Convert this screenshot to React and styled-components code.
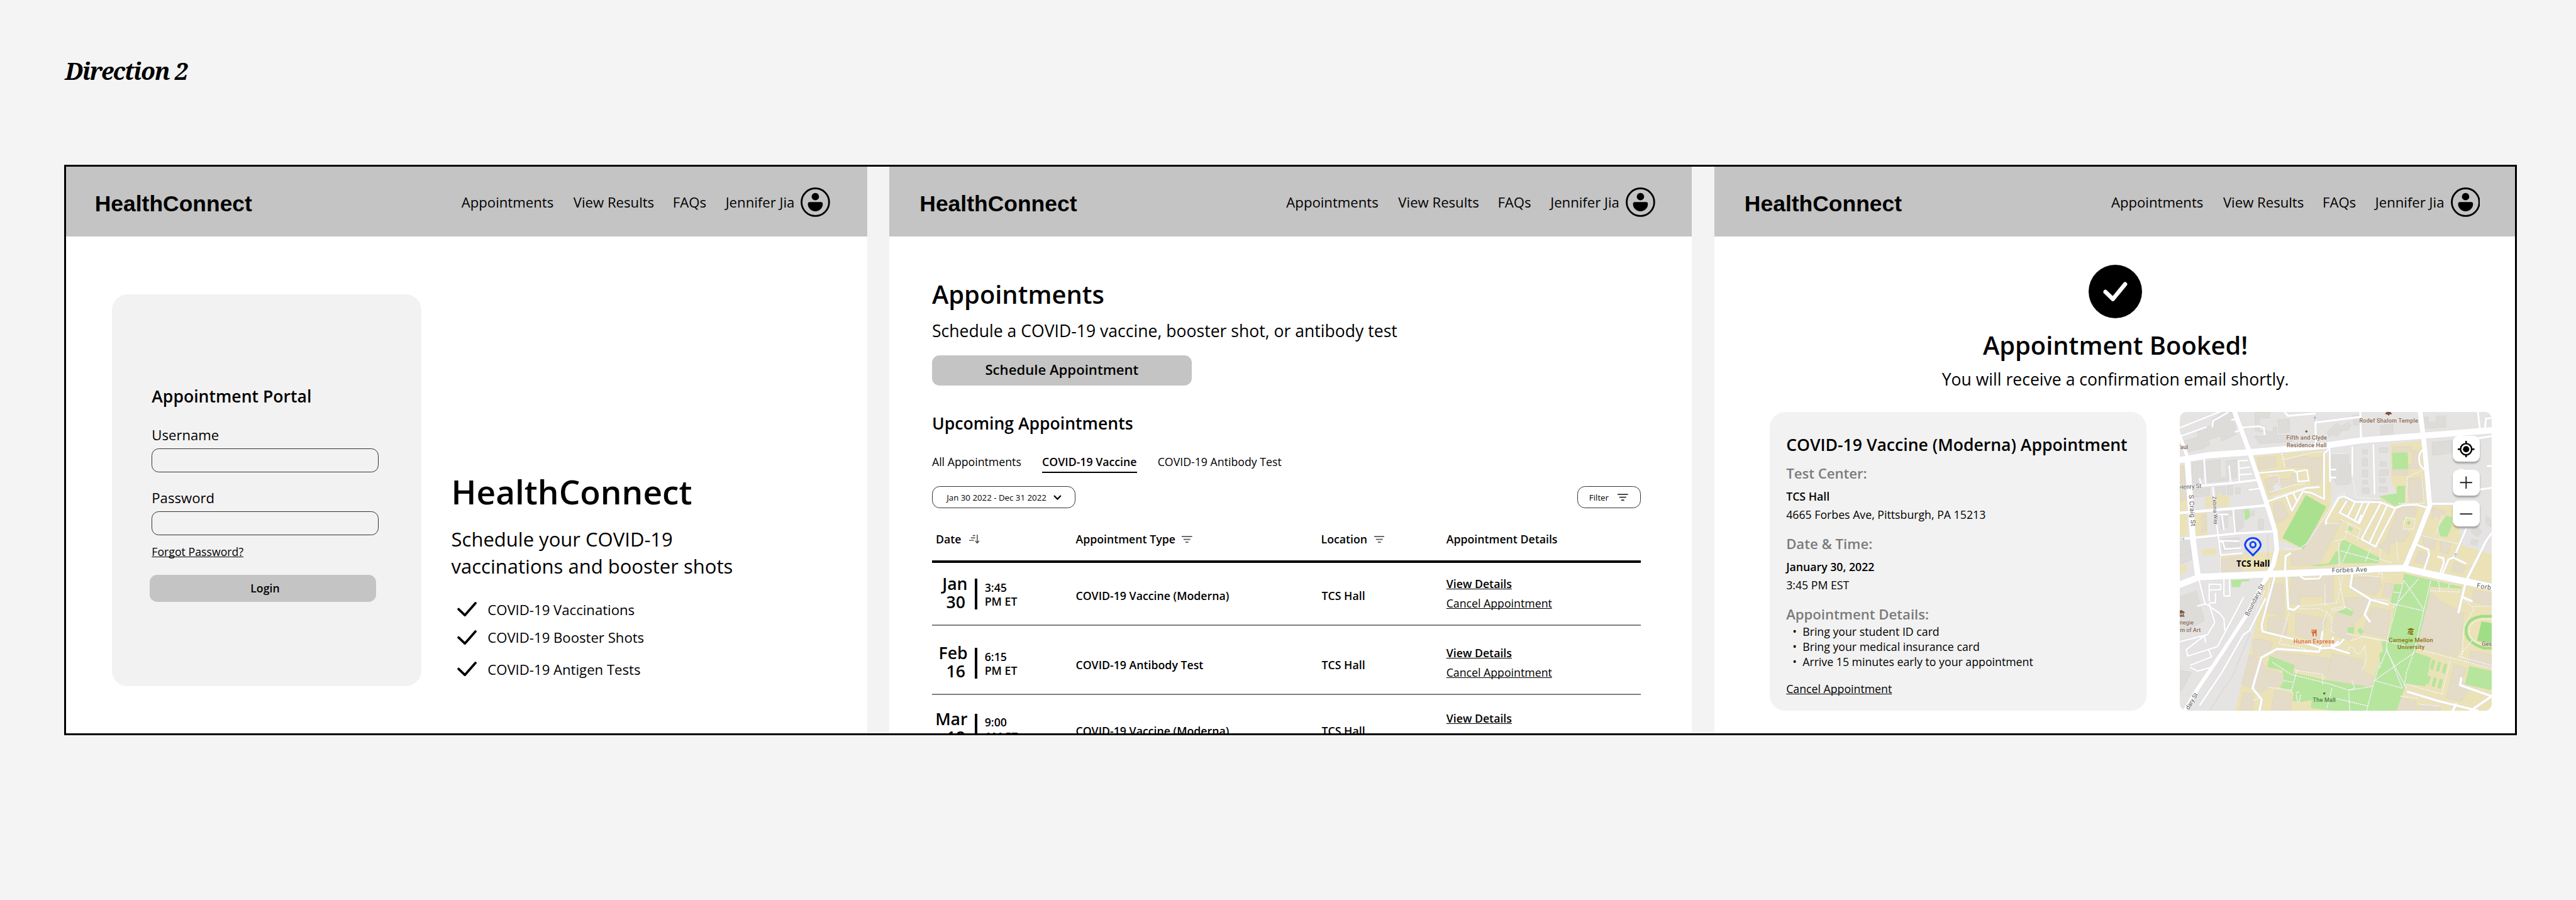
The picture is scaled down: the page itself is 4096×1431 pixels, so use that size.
import React from "react";
import styled, { createGlobalStyle, css } from "styled-components";

/* 1rem equals a 432nd of the window width, so the board always fills the window. */
const GlobalStyle = createGlobalStyle`
  *, *::before, *::after { box-sizing: border-box; }
  html { font-size: calc(100vw / 432); }
  body {
    margin: 0;
    overflow: hidden;
    background: #f4f4f4;
    color: #000;
    font-family: "Open Sans", "Noto Sans", sans-serif;
    font-size: 1.87rem;
    line-height: 1.36;
  }
  h1, h2, h3, p, ul { margin: 0; padding: 0; font: inherit; }
  ul { list-style: none; }
  button { border: 0; padding: 0; color: inherit; font: inherit; }
  svg { display: block; flex: none; }
`;

const sizes = {
  display: "5.61rem",
  title: "4.206rem",
  lead: "3.272rem",
  large: "2.804rem",
  medium: "2.337rem",
  small: "1.87rem",
  tiny: "1.402rem",
};

/* ---------- Board ---------- */

const Board = styled.main`
  display: flex;
  flex-direction: column;
  height: 150.9rem;
  padding-left: 10.8rem;
`;

const BoardTitle = styled.h1`
  height: 27.6rem;
  padding: 9.3rem 0 0 0.1rem;
  font-family: "Noto Serif", "Liberation Serif", serif;
  font-size: 3.95rem;
  font-style: italic;
  font-weight: 700;
  letter-spacing: -0.15rem;
  white-space: nowrap;
`;

const Frame = styled.section`
  position: relative;
  display: flex;
  gap: 3.73rem;
  width: 411.3rem;
  height: 95.7rem;
  overflow: hidden;
  background: #f3f3f3;

  &::after {
    content: "";
    position: absolute;
    inset: 0;
    border: 3px solid #000;
  }
`;

const Screen = styled.article`
  display: flex;
  flex-direction: column;
  flex: none;
  width: 134.6rem;
  height: 100%;
  background: #fff;
  white-space: nowrap;
`;

const Text = styled.p`
  font-size: ${({ $size = "small" }) => sizes[$size]};
  font-weight: ${({ $bold }) => ($bold ? 600 : 400)};
  margin-top: ${({ $top = 0 }) => $top}rem;
  color: ${({ $muted }) => ($muted ? "#7b7b7b" : "inherit")};
`;

const Link = styled.a`
  display: block;
  margin-top: ${({ $top = 0 }) => $top}rem;
  font-size: 1.87rem;
  font-weight: ${({ $bold }) => ($bold ? 600 : 400)};
  text-decoration: underline;
  text-decoration-skip-ink: none;
  text-decoration-thickness: 1px;
`;

const Button = styled.button`
  display: flex;
  align-items: center;
  justify-content: center;
  flex: none;
  background: #c4c4c4;
  border-radius: 1.25rem;
  font-weight: 600;
`;

/* ---------- Navigation ---------- */

const NavBar = styled.header`
  display: flex;
  align-items: center;
  flex: none;
  height: 12.03rem;
  padding: 0.6rem 6.15rem 0 5.1rem;
  background: #c4c4c4;
`;

const Logo = styled.span`
  margin-right: auto;
  padding-top: 0.6rem;
  font-family: "Liberation Sans", Arial, sans-serif;
  font-size: 3.74rem;
  font-weight: 700;
  line-height: 1.15;
`;

const NavLinks = styled.nav`
  display: flex;
  align-items: center;
  gap: 3.33rem;
  font-size: 2.337rem;
`;

const NavLink = styled.a`
  ${({ $tight }) => $tight && css`margin: 0 -0.1rem 0 -0.2rem;`}
`;

const Profile = styled.div`
  display: flex;
  align-items: center;
  gap: 1.07rem;

  svg { width: 4.94rem; height: 4.94rem; }
`;

function Header() {
  return (
    <NavBar>
      <Logo>HealthConnect</Logo>
      <NavLinks>
        <NavLink>Appointments</NavLink>
        <NavLink>View Results</NavLink>
        <NavLink $tight>FAQs</NavLink>
        <Profile>
          Jennifer Jia
          <svg viewBox="0 0 49.4 49.4">
            <circle cx="24.7" cy="24.7" r="23.1" fill="none" stroke="#000" strokeWidth="3" />
            <circle cx="24.7" cy="15.5" r="6.2" />
            <path d="M12.2 27.7q0-3.1 3.1-3.1h18.8q3.1 0 3.1 3.1a12.5 12.4 0 0 1-25 0z" />
          </svg>
        </Profile>
      </NavLinks>
    </NavBar>
  );
}

/* ---------- Icons ---------- */

const CheckSvg = styled.svg`
  width: 3.3rem;
  height: 2.47rem;
`;

const Check = () => (
  <CheckSvg viewBox="0 0 33 24.7" fill="none" stroke="#000" strokeWidth="4" strokeLinecap="round" strokeLinejoin="round">
    <path d="M2.3 12.2 12.8 22.4 30.6 2.2" />
  </CheckSvg>
);

const FilterSvg = styled.svg`
  width: 1.75rem;
  height: 1.2rem;
`;

const FilterIcon = ({ color = "#5a5a5a" }) => (
  <FilterSvg viewBox="0 0 17.5 12" stroke={color} strokeWidth="1.9">
    <path d="M0 1.2h17.5M3 6h11.5M6.2 10.8h5" />
  </FilterSvg>
);

const SortSvg = styled.svg`
  width: 1.75rem;
  height: 1.5rem;
`;

const SortIcon = () => (
  <SortSvg viewBox="0 0 17.5 15" fill="none" stroke="#444" strokeWidth="1.5">
    <path d="M6 1.6h4.2M3 5.6h7.2M0 9.6h8.2M13.6 0v14M10.4 10.6l3.2 3.5 3.2-3.5" />
  </SortSvg>
);

const ChevronSvg = styled.svg`
  width: 1.35rem;
  height: 0.85rem;
`;

/* ---------- Login screen ---------- */

const LoginBody = styled.div`
  display: flex;
  align-items: flex-start;
  padding: 9.7rem 0 0 8rem;
`;

const LoginCard = styled.form`
  display: flex;
  flex-direction: column;
  width: 51.9rem;
  height: 65.7rem;
  padding: 15.17rem 0 0 6.65rem;
  background: #f2f2f2;
  border-radius: 2.6rem;
`;

const Field = styled.div`
  width: 38rem;
  height: 3.97rem;
  flex: none;
  margin-top: 0.77rem;
  border: 1px solid #333;
  border-radius: 1.2rem;
`;

const LoginButton = styled(Button)`
  width: 38rem;
  height: 4.55rem;
  margin: 2.68rem 0 0 -0.35rem;
  padding: 0 0 0.26rem 0.7rem;
`;

const Intro = styled.div`
  padding: 29.35rem 0 0 4.98rem;
`;

const Pitch = styled.p`
  width: 50rem;
  margin-top: 1.89rem;
  font-size: 3.272rem;
  line-height: 4.47rem;
`;

const Benefit = styled.li`
  display: flex;
  align-items: center;
  gap: 1.84rem;
  margin-top: ${({ $top }) => $top}rem;
  padding-left: 0.95rem;
  font-size: 2.337rem;
`;

function LoginScreen() {
  return (
    <Screen>
      <Header />
      <LoginBody>
        <LoginCard>
          <Text as="h2" $size="large" $bold>Appointment Portal</Text>
          <Text $size="medium" $top={2.98}>Username</Text>
          <Field />
          <Text $size="medium" $top={2.63}>Password</Text>
          <Field />
          <Link $top={1.45}>Forgot Password?</Link>
          <LoginButton type="button">Login</LoginButton>
        </LoginCard>
        <Intro>
          <Text as="h2" $size="display" $bold>HealthConnect</Text>
          <Pitch>
            Schedule your COVID-19
            <br />
            vaccinations and booster shots
          </Pitch>
          <ul>
            <Benefit $top={3.47}><Check />COVID-19 Vaccinations</Benefit>
            <Benefit $top={1.52}><Check />COVID-19 Booster Shots</Benefit>
            <Benefit $top={2.12}><Check />COVID-19 Antigen Tests</Benefit>
          </ul>
        </Intro>
      </LoginBody>
    </Screen>
  );
}

/* ---------- Appointments screen ---------- */

const ListBody = styled.div`
  display: flex;
  flex-direction: column;
  width: 126.02rem;
  padding: 6.93rem 0 0 7.17rem;
`;

const ScheduleButton = styled(Button)`
  width: 43.55rem;
  height: 5.03rem;
  margin-top: 2.22rem;
  padding-bottom: 0.26rem;
  font-size: 2.337rem;
`;

const Tabs = styled.nav`
  display: flex;
  gap: 3.5rem;
  margin-top: 3.28rem;
`;

const Tab = styled.a`
  padding-bottom: 0.34rem;
  border-bottom: 2px solid ${({ $active }) => ($active ? "#000" : "transparent")};
  font-weight: ${({ $active }) => ($active ? 600 : 400)};
`;

const Controls = styled.div`
  display: flex;
  justify-content: space-between;
  margin-top: 2.28rem;
`;

const Pill = styled.div`
  display: flex;
  align-items: center;
  gap: ${({ $gap }) => $gap}rem;
  width: ${({ $width }) => $width}rem;
  height: 3.68rem;
  padding-left: ${({ $pad }) => $pad}rem;
  border: 1px solid #333;
  border-radius: 1.3rem;
  font-size: 1.402rem;
`;

const columns = css`
  display: grid;
  grid-template-columns: 24.1rem 41.15rem 21rem 1fr;
`;

const HeadRow = styled.div`
  ${columns}
  margin-top: 3.91rem;
  padding-bottom: 2.3rem;
  border-bottom: 4px solid #000;
`;

const HeadCell = styled.div`
  display: flex;
  align-items: center;
  gap: ${({ $gap = 1.1 }) => $gap}rem;
  padding-left: ${({ $inset = 0 }) => $inset}rem;
  font-weight: 600;
`;

const Row = styled.div`
  ${columns}
  align-items: start;
  flex: none;
  height: ${({ $height }) => $height}rem;
  padding-top: ${({ $lead }) => $lead}rem;
  border-bottom: 2px solid #808080;
`;

const When = styled.div`
  display: flex;
  padding-top: 1.94rem;
`;

const Day = styled.div`
  display: flex;
  flex-direction: column;
  align-items: flex-end;
  width: 5.97rem;
  font-size: 2.804rem;
  font-weight: 600;
  line-height: 3.1rem;
`;

const DayNumber = styled.span`
  padding-right: 0.38rem;
`;

const Divider = styled.div`
  width: 0.4rem;
  height: 5.14rem;
  margin: 0.66rem 1.27rem 0 1.2rem;
  background: #000;
`;

const Time = styled.div`
  padding-top: 0.94rem;
  font-weight: 600;
  line-height: 2.4rem;
`;

const Cell = styled.div`
  padding: 4.18rem 0 0 ${({ $inset = 0 }) => $inset}rem;
  font-weight: 600;
`;

const Actions = styled.div`
  padding-top: 1.82rem;
  line-height: 3.3rem;
`;

const appointments = [
  { month: "Jan", day: "30", time: "3:45", zone: "PM ET", type: "COVID-19 Vaccine (Moderna)", height: 10.55, lead: 0 },
  { month: "Feb", day: "16", time: "6:15", zone: "PM ET", type: "COVID-19 Antibody Test", height: 11.57, lead: 1.05 },
  { month: "Mar", day: "18", time: "9:00", zone: "AM ET", type: "COVID-19 Vaccine (Moderna)", height: 11.57, lead: 0.55 },
];

function AppointmentsScreen() {
  return (
    <Screen>
      <Header />
      <ListBody>
        <Text as="h2" $size="title" $bold>Appointments</Text>
        <Text $size="large" $top={1.27}>Schedule a COVID-19 vaccine, booster shot, or antibody test</Text>
        <ScheduleButton type="button">Schedule Appointment</ScheduleButton>
        <Text as="h3" $size="large" $bold $top={4.5}>Upcoming Appointments</Text>
        <Tabs>
          <Tab>All Appointments</Tab>
          <Tab $active>COVID-19 Vaccine</Tab>
          <Tab>COVID-19 Antibody Test</Tab>
        </Tabs>
        <Controls>
          <Pill $width={24.1} $pad={2.35} $gap={1.22}>
            Jan 30 2022 - Dec 31 2022
            <ChevronSvg viewBox="0 0 13.5 8.5" fill="none" stroke="#000" strokeWidth="2.3">
              <path d="M1 1l5.75 6L12.5 1" />
            </ChevronSvg>
          </Pill>
          <Pill $width={10.65} $pad={1.9} $gap={1.5}>
            Filter
            <FilterIcon color="#333" />
          </Pill>
        </Controls>
        <HeadRow>
          <HeadCell $inset={0.65} $gap={1.35}>Date<SortIcon /></HeadCell>
          <HeadCell>Appointment Type<FilterIcon /></HeadCell>
          <HeadCell>Location<FilterIcon /></HeadCell>
          <HeadCell>Appointment Details</HeadCell>
        </HeadRow>
        {appointments.map((a) => (
          <Row key={a.month} $height={a.height} $lead={a.lead}>
            <When>
              <Day>
                {a.month}
                <DayNumber>{a.day}</DayNumber>
              </Day>
              <Divider />
              <Time>
                {a.time}
                <br />
                {a.zone}
              </Time>
            </When>
            <Cell>{a.type}</Cell>
            <Cell $inset={0.1}>TCS Hall</Cell>
            <Actions>
              <Link $bold>View Details</Link>
              <Link>Cancel Appointment</Link>
            </Actions>
          </Row>
        ))}
      </ListBody>
    </Screen>
  );
}

/* ---------- Confirmation screen ---------- */

const ConfirmBody = styled.div`
  display: flex;
  flex-direction: column;
  align-items: center;
  padding-top: 4.77rem;
`;

const Badge = styled.div`
  display: grid;
  place-items: center;
  width: 9rem;
  height: 9rem;
  border-radius: 50%;
  background: #000;

  svg { width: 4.1rem; height: 3.3rem; }
`;

const Panels = styled.div`
  display: flex;
  align-self: stretch;
  gap: 5.64rem;
  margin-top: 3.6rem;
  padding-left: 9.33rem;
`;

const Details = styled.section`
  width: 63.14rem;
  height: 50.1rem;
  padding: 3.57rem 0 0 2.76rem;
  background: #f2f2f2;
  border-radius: 2.6rem;
`;

const Notes = styled.ul`
  margin-top: 0.25rem;
  line-height: 2.52rem;
`;

const Note = styled.li`
  display: flex;
  padding-left: 1.08rem;

  &::before {
    content: "•";
    width: 1.67rem;
  }
`;

/* ---------- Map ---------- */

const MapFrame = styled.div`
  position: relative;
  width: 52.3rem;
  height: 50.1rem;
  overflow: hidden;
  border-radius: 1.2rem;
`;

const MapSvg = styled.svg`
  width: 100%;
  height: 100%;
  font-family: Roboto, "Open Sans", sans-serif;
  font-size: 29px;
  fill: none;
`;

const MapControls = styled.div`
  position: absolute;
  top: 4.03rem;
  right: 2.03rem;
  display: flex;
  flex-direction: column;
`;

const MapButton = styled.button`
  display: grid;
  place-items: center;
  width: 4.53rem;
  height: 4.33rem;
  margin-bottom: ${({ $below = 0 }) => $below}rem;
  background: #fff;
  border-radius: 0.95rem;
  box-shadow: 0 0.3rem 0.3rem rgba(0, 0, 0, 0.28);

  svg { width: 2.8rem; height: 2.8rem; }
`;

const greyBlocks = [
  "M220 0L262 0 284 112 212 146 204 120 142 140 150 166 112 186 40 200 22 146 92 128 84 92 176 62 164 36z",
  "M378 0H452V30H400V100H470V76H488V118H560L566 148 400 160 376 122H440V92L380 96z",
  "M492 40L550 36 554 100 500 106z",
  "M740 100L790 56 812 72 850 52 862 70 846 92 812 96 792 124 768 114 752 126z",
  "M870 18L902 14V66H874z",
  "M1010 68L1072 62V120L1010 126z",
  "M1222 26L1250 24V52H1290V20H1338V76L1230 84z",
  "M1268 152L1370 142V206L1272 218z",
  "M62 254L116 248V330L104 352 62 360z",
  "M134 248L204 240V330H234V246L286 240V330L240 344 140 354z",
  "M764 214L850 210V262H860V358L834 366H792L764 326z",
  "M920 188h24v24h-24zM918 232h26v40h-26zM918 292h28v36h-28zM920 344h24v20h-24zM918 382h36v28h-36z",
  "M1004 180h42v24h-42zM1008 250h32v22h-32zM1004 292h46v28h-46zM1006 334h30v22h-30zM1004 376h40v26h-40z",
  "M70 388L150 380V420L72 430zM180 380L230 376V428L186 430zM240 372h26v46h-26zM280 382h24v30h-24z",
  "M204 498L264 494 268 520H240V580L206 590z",
  "M278 490L320 488V580L286 600zM396 540l26 0v50h-26zM354 500l20-2v24h-20z",
  "M210 640L300 632V690L216 700zM326 690L396 684V712L330 720z",
  "M0 640H56V700H0zM0 712L60 700 66 740 0 770z",
  "M0 930L84 900 124 1050 10 1110 0 1100z",
  "M0 1300L60 1310 10 1400 0 1400z",
  "M1488 570l32 30-22 30-34-26zM1540 520l26 22v40l-26-22zM1470 640l32 6-6 28-34-10z",
];

const campus = [
  "M358 224L738 188 762 372 760 472 790 432 880 450 1000 442 1090 410 1064 350 1058 162 1226 144 1256 468 1378 466 1400 560 1424 672 1569 716V1503H280L310 1372 350 1215 430 850 462 800H206V728L494 700 620 690 492 640 432 460z",
  "M0 266L24 264 40 620 0 632z",
  "M74 512L136 500 142 620 82 624z",
  "M128 428L190 424V408H212V424L248 424V476L130 484z",
  "M110 696L186 684V716L112 724z",
  "M0 776L36 766V802L0 816z",
];

const campusBuildings = [
  "M390 232L480 224 484 276 396 288z",
  "M530 240L600 230 606 224 640 222 646 232 716 226 712 286 706 360 664 366 660 280 540 276z",
  "M426 340L500 318 504 340 560 336 562 312 588 316V352L540 368 452 420 444 400z",
  "M472 460Q500 440 524 462L548 528 492 558 476 540z",
  "M1072 178L1166 172V196L1072 202zM1170 198L1202 196V284L1154 286V262H1170zM1068 292H1148V318H1070z",
  "M1152 336L1222 328 1232 440 1164 460 1148 420z",
  "M688 562L812 552 700 768 562 772 556 710 620 696z",
  "M1098 486L1160 470 1196 490 1180 530 1140 520 1110 560 1156 610 1130 650 1060 660 1050 720 1030 690 1000 680 1040 640z",
  "M1270 480L1338 500 1310 540 1290 520 1268 540z",
  "M1216 616L1290 640 1278 690 1230 680z M1310 640L1366 664 1350 716 1310 702zM1204 700L1250 712 1232 766 1182 756z M1380 752L1438 778 1420 812 1368 800z",
  "M560 830L604 822 640 840H700L720 820 772 818V962H724V930H604V968H550z",
  "M876 832L1000 832 1016 880 980 924 860 886z",
  "M1030 860L1080 866 1066 936 1024 926z",
  "M460 862L522 866 528 1030 440 1008z",
  "M584 1012L740 1040 726 1100 700 1160 580 1120z M446 1034L510 1030 546 1062 536 1120 440 1102z",
  "M830 936L956 932 950 990 880 1060 860 1150 770 1120 756 1080 790 1010 840 980z",
  "M966 980L1060 1002 1040 1140 920 1106z",
  "M1264 906L1310 950 1430 1016 1410 1190 1390 1232 1190 1180z",
  "M1480 896L1569 912V980L1470 950z M1462 1200L1569 1222V1290L1456 1256z",
  "M364 1150Q380 1130 466 1160L450 1220 372 1230z",
  "M350 1222L410 1246 430 1290 524 1320 516 1376 440 1390 420 1412 310 1370z",
  "M480 1206L760 1240 740 1330 580 1290 460 1240z",
  "M766 1214L920 1250 930 1310 974 1330 960 1380 742 1350z",
  "M1380 1270L1440 1290 1420 1350 1460 1390 1420 1454 1340 1440z",
  "M320 1410L370 1420 366 1503H300z M480 1398L560 1420V1503H460z M1110 1440L1190 1456V1503H1090z M1200 1470L1310 1480V1503H1200z",
  "M210 740L310 726V810H210zM0 278L22 274 34 440 0 448zM108 524L134 516V600L110 606z",
];

const lawns = [
  "M1002 424L1092 410 1092 372 1134 372 1132 458 1080 472z",
  "M1068 206L1146 203 1150 286 1070 290z",
  "M324 490L348 488 353 530 328 548z",
  "M820 640L1006 734 1000 760 812 762 802 680z",
  "M652 772L750 762 786 700 802 706V764L700 776z",
  "M1342 522L1372 530 1366 580 1344 630 1310 624 1300 580z",
  "M846 572L872 584 864 602 844 592z",
  "M258 846L352 842 350 850 310 854 304 880 262 882z",
  "M1128 812L1156 820 1416 880V888L1260 880 1250 950 1186 1210 1264 1236 1236 1380 1140 1366 1090 1503H940L974 1350 1006 1250 1004 1220 1022 1200 1016 1156 1042 1152 1086 966 1060 960 1080 866 1120 868z",
  "M452 1226L578 1274 570 1312 740 1350 974 1386 950 1503H780L700 1494 660 1490 664 1450 600 1460 566 1452 574 1410 504 1386 524 1352 518 1300 440 1284z",
  "M794 1008L832 986 876 994 866 1028z",
  "M846 1084L880 1082 874 1116 842 1108z",
  "M906 1084L926 1106 912 1122 892 1100z",
  "M1270 1246l16 5-12 46-16-5zM1300 1256l16 5-12 46-16-5zM1330 1266l16 5-12 46-16-5zM1248 1326l16 5-12 40-16-5zM1278 1334l16 5-12 46-16-5zM1308 1342l16 5-12 46-16-5z",
  "M1456 1278L1569 1304V1400L1436 1370z",
];

const streets = [
  ["M0 242L140 218 360 202 740 168 910 143 1215 120 1569 92", 32],
  ["M-4 110L40 230", 18],
  ["M38 236L66 640 92 830", 30],
  ["M-10 872L100 830 430 817 850 800 1000 788 1130 786 1300 824 1569 880", 34],
  ["M272 -10L350 200 440 470 480 600 488 690 472 760 430 846", 24],
  ["M472 770L420 860 330 1030 210 1215 90 1392 20 1510", 20],
  ["M1208 -10L1232 180 1258 470 1192 640 1128 790", 25],
  ["M0 508L240 488 436 470", 14],
  ["M0 640L280 612 474 600", 12],
  ["M98 372L260 358 390 342", 12],
  ["M0 80L200 0M0 124L132 76M164 74L168 44 240 4M280 100L300 94M316 78L400 72 424 82 426 112M262 40L290 34", 9],
  ["M520 -10L544 20 680 8M682 40L686 170M690 52L900 26M908 0L912 140M1500 0L1510 90M1569 30L1540 34 1536 80M1450 140L1569 122M1510 390L1569 382M1548 272H1569M1258 462H1380M1410 290L1440 296", 11],
  ["M122 240L130 360M248 272L256 350M300 350L296 246 340 244M300 284L350 278M300 316L362 312M348 392L396 386M100 336L106 360", 8],
  ["M166 380L190 600 206 720 310 710M268 490L278 606M196 516H242M212 520L222 592M196 650L218 656 226 690 306 684M196 648L298 650", 8],
  ["M390 308L570 292 590 306M590 300L640 292 648 346 594 350z", 8],
  ["M436 452L640 382 700 378M618 400L660 406 726 438 726 210 750 186M536 424L564 496 616 404M572 410L590 450", 9],
  ["M754 186L756 350M756 290H784M756 330H784M868 176V316M974 166L980 412", 9],
  ["M734 562L738 540 800 432 826 424 880 452 1010 454 1082 484 1120 470 1190 466 1254 484", 10],
  ["M838 450L804 506 904 560 950 460M878 460L846 524M918 460L880 546", 9],
  ["M1010 460L914 640 984 678 1082 490M1044 468L956 656M900 552L912 520", 9],
  ["M1224 192Q1204 200 1204 236T1228 286", 9],
  ["M1192 668L1250 692 1254 720 1228 796M1298 728L1326 736 1328 760 1312 806M1440 590L1380 730 1352 742 1320 820M1380 734L1438 762", 10],
  ["M1569 610L1540 650 1440 850 1402 1008M1430 934L1468 952", 12],
  ["M556 712L532 726 530 800 M536 820L546 990 576 996 598 976", 11],
  ["M606 826L626 840 700 838 712 824", 9],
  ["M868 812L858 880 960 944 1046 968M960 944L930 1020 956 1054", 11],
  ["M480 820L412 1070 416 1104 560 1140 700 1184M718 1106L704 1200M704 1190L760 1186 852 1214M760 1186L800 1170 824 1146M764 1186L770 1136M762 1186L796 1156", 10],
  ["M700 1206L490 1192 410 1236 366 1390 412 1446 400 1510", 11],
  ["M98 850L126 962 200 1012 222 1040 226 1096M132 966L90 976M148 966L176 1060 140 1120 0 1156M148 950V866L206 868V894L152 896M180 914V960H150M222 840V926H252L250 840", 8],
  ["M320 934L190 1180 40 1228 32 1196 124 1126 130 1160 M144 1194L160 1232 54 1274 M54 1286L90 1304 164 1282", 8],
  ["M430 940L350 1100 320 1120 212 1310 102 1474", 9],
  ["M1148 1408L1300 1454 1500 1503M1416 1340L1410 1374 1569 1430 1462 1503M1390 1470L1370 1510", 12],
];

const paths = [
  "M510 212L526 240 660 206 740 196M514 210L528 280M452 404L560 372 630 360M470 430L640 376M446 320H500V360",
  "M868 320L886 430 1000 436M830 410Q800 410 790 436L640 660 600 690 520 690",
  "M1228 290L1144 330 1142 460M764 210H850M1218 330L1230 460 1100 460",
  "M810 540L850 560 830 640 774 650M800 660V780M800 560L730 560M830 600L1000 680M850 560L910 590 890 650M812 700L1000 750M860 664L814 764M956 694L934 752M1010 690L1006 740 1070 760",
  "M1130 550L1140 530 1186 540 1176 590 1124 588zM1090 650L1100 760M1210 620L1400 664M1320 520L1290 610",
  "M206 724L204 810M452 860L430 1000",
  "M800 830L830 990 760 1000M820 830L790 960 590 980M730 870V980M900 820L1000 830V810H1020V840",
  "M600 990L700 990 740 1006 768 1040 760 1100 780 1116M740 1010L720 1060 724 1100M550 1010L500 1166 630 1190V1210M760 990L830 980 870 1000",
  "M1126 850L1042 1152 1040 1200 1004 1290M1262 850L1180 1200 1140 1310 1130 1380M1130 850L1224 990M1200 840L1070 990M1074 906L1110 910M1050 960L1224 1000M980 940L1050 950",
  "M1260 900L1410 906M1300 850L1310 900M1356 866L1350 890M1430 940L1470 980 1569 976M1480 990L1430 1080 1420 1240M1470 1150L1406 1230 1569 1276",
  "M840 1116L1040 1152 1180 1190 1569 1290M860 1150L930 1130 1010 1150M840 1210Q860 1160 880 1200T930 1180L940 1240 920 1300",
  "M1180 1210L980 1350 940 1503M1040 1190L1120 1390M974 1350L1120 1390M1006 1260L980 1350M1040 1200L1140 1390",
  "M466 1260L560 1320 760 1370 850 1400 974 1380M580 1300L720 1320 718 1370M560 1400L440 1384M524 1352L570 1360M560 1410L590 1298M766 1390L740 1490M850 1410L856 1503M600 1410Q580 1400 590 1444T608 1420M780 1440L950 1480M866 1350L880 1390 850 1400",
  "M1140 1370L1320 1420 1360 1250M1110 1430L1200 1440M1200 1470L1310 1480M370 1450L400 1440",
];

function CampusMap() {
  return (
    <MapFrame>
      <MapSvg viewBox="0 0 1569 1503" preserveAspectRatio="none">
        <rect width="1569" height="1503" fill="#e5e4e2" />
        <g fill="#dddcd9" stroke="#d5d3d0" strokeWidth="2">
          {greyBlocks.map((d) => <path key={d} d={d} />)}
        </g>
        <g fill="#ebe2b7">
          {campus.map((d) => <path key={d} d={d} />)}
        </g>
        <g fill="#e4dcc8" stroke="#dcd4bd" strokeWidth="2">
          {campusBuildings.map((d) => <path key={d} d={d} />)}
        </g>
        <g fill="#b6e59d">
          {lawns.map((d) => <path key={d} d={d} />)}
        </g>
        <path d="M634 418L738 478 622 690 516 634z" fill="#aae18f" />
        <path d="M1518 1054L1569 1062V1164L1496 1152z" fill="#9ede84" />
        <circle cx="1152" cy="558" r="8" fill="#aae18f" />
        <path d="M470 376L492 356 500 370 512 372 504 388 478 400z" fill="#e6e7ee" />
        <path d="M1580 1028H1520Q1440 1040 1440 1100T1530 1188H1580" stroke="#9ede84" strokeWidth="14" />
        <path d="M1580 1042H1530Q1456 1050 1456 1104T1540 1174H1580" stroke="#fff" strokeWidth="4" strokeDasharray="6 5" />
        <path d="M442 616L446 800 360 1100 264 1330 150 1503" stroke="#cfcecb" strokeWidth="2.5" />
        <path d="M426 900L392 980 356 1110" stroke="#fff" strokeWidth="5" strokeDasharray="6 5" />

        <g stroke="#d6d6e4" strokeLinejoin="round" strokeLinecap="round">
          {streets.map(([d, w]) => <path key={d} d={d} strokeWidth={w + 3} />)}
          {paths.map((d) => <path key={d} d={d} strokeWidth="7" opacity="0.4" />)}
        </g>
        <g stroke="#fff" strokeWidth="4.5" strokeDasharray="6 5">
          {paths.map((d) => <path key={d} d={d} />)}
        </g>
        <g stroke="#fff" strokeLinejoin="round" strokeLinecap="round">
          {streets.map(([d, w]) => <path key={d} d={d} strokeWidth={w} />)}
        </g>

        <g fill="#876a5b" stroke="#efece6" strokeWidth="3" paintOrder="stroke" textAnchor="middle" fontWeight="500">
          <text x="1051" y="54" textLength="296">Rodef Shalom Temple</text>
          <text x="638" y="140" textLength="203">Fifth and Clyde</text>
          <text x="638" y="178" textLength="200">Residence Hall</text>
          <text x="20" y="188">'aul</text>
          <text x="34" y="1069" textLength="70">negie</text>
          <text x="53" y="1107" textLength="105">m of Art</text>
          <text x="1545" y="1176">Ges</text>
        </g>
        <g fill="#7a5240">
          <circle cx="637" cy="98" r="5.5" />
          <circle cx="727" cy="1416" r="5.5" />
          <path d="M1032 10L1040 0H1060L1068 10 1056 13 1050 19 1044 13z" />
          <path d="M0 1000L8 997 24 1006V1012H0zM0 1014H20V1026H24V1030H0z" />
          <path d="M4 1024V1016L9 1021 14 1016V1024" stroke="#e5e4e2" strokeWidth="3" fill="none" />
        </g>
        <g fill="#d9622b" stroke="none">
          <path d="M663 1094h3v14h3v-14h4v14h3v-14h3v16l-5 5v13h-6v-13l-5-5zM688 1093v35h-5v-14h-6q0-18 11-21z" />
          <text x="675" y="1164" textAnchor="middle" fontWeight="500" textLength="205" stroke="#f3ead0" strokeWidth="3" paintOrder="stroke">Hunan Express</text>
        </g>
        <g fill="#85700f" textAnchor="middle" fontWeight="500">
          <path d="M1144 1094L1162 1087 1181 1094 1162 1101zM1150 1100L1162 1105 1174 1100V1108L1162 1112 1150 1108zM1147 1110h5v8h-5zM1156 1114h18v7h-18z" />
          <text x="1163" y="1157" textLength="222">Carnegie Mellon</text>
          <text x="1163" y="1194" textLength="136">University</text>
        </g>
        <text x="727" y="1458" fill="#4e7a3d" textAnchor="middle" fontWeight="500" textLength="115">The Mall</text>

        <g fill="#555" stroke="#fff" strokeWidth="4" paintOrder="stroke" fontSize="33">
          <text x="766" y="808" textLength="176" transform="rotate(-1.5 766 808)">Forbes Ave</text>
          <text x="1493" y="884" textLength="72" transform="rotate(9 1493 884)">Forb</text>
          <text x="-4" y="390" textLength="114" fontSize="31" transform="rotate(-4 -4 390)">Henry St</text>
          <text x="46" y="418" textLength="158" transform="rotate(86 46 418)">S Craig St</text>
          <text x="164" y="425" textLength="142" fontSize="27" transform="rotate(86 164 425)">Zebina Way</text>
          <text x="346" y="1028" textLength="174" fontSize="31" transform="rotate(-63 346 1028)">Boundary St</text>
          <text x="46" y="1500" textLength="92" fontSize="31" transform="rotate(-60 46 1500)">dary St</text>
        </g>
        <g stroke="#9a9fc4" strokeWidth="3">
          <path d="M0 639H22M16 633L23 639 16 645M680 48V24M674 31L680 24 686 31M1383 732L1388 712M1382 718L1388 711 1393 719" />
        </g>

        <path d="M368 722C352 700 328 690 328 667A40 39 0 0 1 407 667C407 690 384 700 368 722z" stroke="#0a3fff" strokeWidth="9" strokeLinejoin="round" />
        <circle cx="368" cy="668" r="14" stroke="#0a3fff" strokeWidth="9" />
        <text x="369" y="780" fill="#000" fontFamily="Open Sans" fontWeight="700" fontSize="42" textAnchor="middle">TCS Hall</text>
      </MapSvg>

      <MapControls>
        <MapButton type="button" $below={1.33}>
          <svg viewBox="0 0 28 28" fill="none" stroke="#000" strokeWidth="2.6">
            <circle cx="14" cy="14" r="9.4" />
            <circle cx="14" cy="14" r="5.3" fill="#000" stroke="none" />
            <path d="M14 0v5M14 23v5M0 14h5M23 14h5" />
          </svg>
        </MapButton>
        <MapButton type="button" $below={0.84}>
          <svg viewBox="0 0 28 28" stroke="#222" strokeWidth="2">
            <path d="M3.8 14h20.4M14 3.8v20.4" />
          </svg>
        </MapButton>
        <MapButton type="button">
          <svg viewBox="0 0 28 28" stroke="#222" strokeWidth="2">
            <path d="M3.6 15h20.8" />
          </svg>
        </MapButton>
      </MapControls>
    </MapFrame>
  );
}

function ConfirmationScreen() {
  return (
    <Screen>
      <Header />
      <ConfirmBody>
        <Badge>
          <svg viewBox="0 0 41 33" fill="none" stroke="#fff" strokeWidth="7" strokeLinecap="round" strokeLinejoin="round">
            <path d="M4 17L16.5 29 37 4" />
          </svg>
        </Badge>
        <Text as="h2" $size="title" $bold $top={1.64}>Appointment Booked!</Text>
        <Text $size="large" $top={0.93}>You will receive a confirmation email shortly.</Text>
        <Panels>
          <Details>
            <Text as="h3" $size="large" $bold>COVID-19 Vaccine (Moderna) Appointment</Text>
            <Text $size="medium" $bold $muted $top={1.28}>Test Center:</Text>
            <Text $bold $top={0.97}>TCS Hall</Text>
            <Text $top={0.58}>4665 Forbes Ave, Pittsburgh, PA 15213</Text>
            <Text $size="medium" $bold $muted $top={1.99}>Date &amp; Time:</Text>
            <Text $bold $top={1.02}>January 30, 2022</Text>
            <Text $top={0.51}>3:45 PM EST</Text>
            <Text $size="medium" $bold $muted $top={1.98}>Appointment Details:</Text>
            <Notes>
              <Note>Bring your student ID card</Note>
              <Note>Bring your medical insurance card</Note>
              <Note>Arrive 15 minutes early to your appointment</Note>
            </Notes>
            <Link $top={1.87}>Cancel Appointment</Link>
          </Details>
          <CampusMap />
        </Panels>
      </ConfirmBody>
    </Screen>
  );
}

export default function App() {
  return (
    <>
      <GlobalStyle />
      <Board>
        <BoardTitle>Direction 2</BoardTitle>
        <Frame>
          <LoginScreen />
          <AppointmentsScreen />
          <ConfirmationScreen />
        </Frame>
      </Board>
    </>
  );
}
